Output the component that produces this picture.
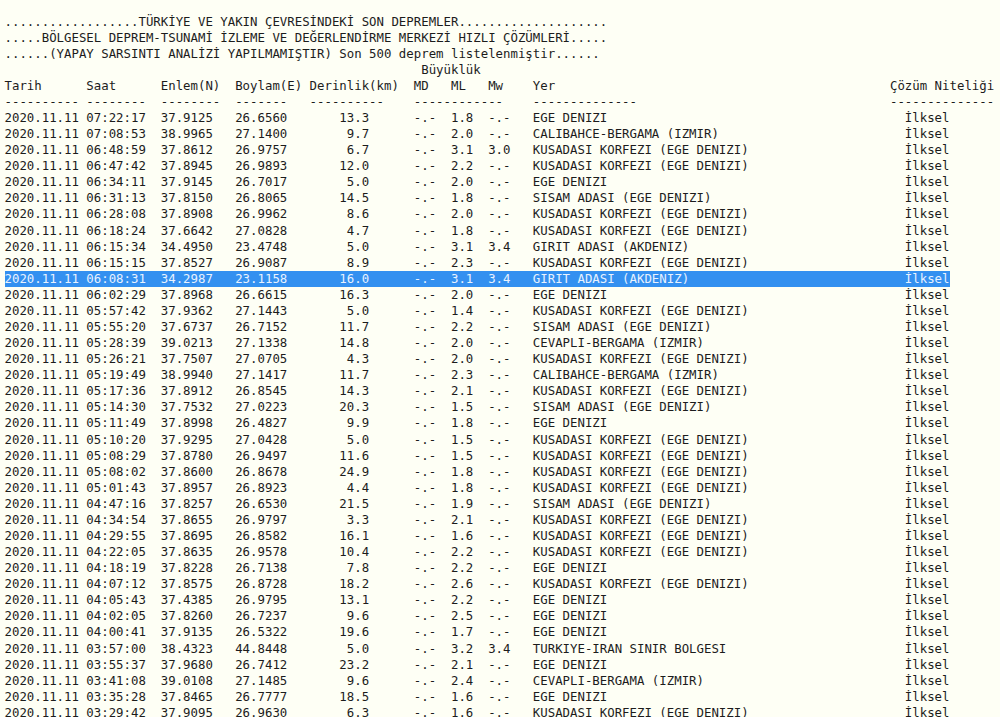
const KUS = "KUSADASI KORFEZI (EGE DENIZI)";
const EGE = "EGE DENIZI";
const SIS = "SISAM ADASI (EGE DENIZI)";
const GIR = "GIRIT ADASI (AKDENIZ)";
const CAL = "CALIBAHCE-BERGAMA (IZMIR)";
const CEV = "CEVAPLI-BERGAMA (IZMIR)";

// saat, enlem, boylam, derinlik, ML, Mw, yer
const rows: [string, string, string, string, string, string, string][] = [
  ["07:22:17", "37.9125", "26.6560", "13.3", "1.8", "-.-", EGE],
  ["07:08:53", "38.9965", "27.1400", "9.7", "2.0", "-.-", CAL],
  ["06:48:59", "37.8612", "26.9757", "6.7", "3.1", "3.0", KUS],
  ["06:47:42", "37.8945", "26.9893", "12.0", "2.2", "-.-", KUS],
  ["06:34:11", "37.9145", "26.7017", "5.0", "2.0", "-.-", EGE],
  ["06:31:13", "37.8150", "26.8065", "14.5", "1.8", "-.-", SIS],
  ["06:28:08", "37.8908", "26.9962", "8.6", "2.0", "-.-", KUS],
  ["06:18:24", "37.6642", "27.0828", "4.7", "1.8", "-.-", KUS],
  ["06:15:34", "34.4950", "23.4748", "5.0", "3.1", "3.4", GIR],
  ["06:15:15", "37.8527", "26.9087", "8.9", "2.3", "-.-", KUS],
  ["06:08:31", "34.2987", "23.1158", "16.0", "3.1", "3.4", GIR],
  ["06:02:29", "37.8968", "26.6615", "16.3", "2.0", "-.-", EGE],
  ["05:57:42", "37.9362", "27.1443", "5.0", "1.4", "-.-", KUS],
  ["05:55:20", "37.6737", "26.7152", "11.7", "2.2", "-.-", SIS],
  ["05:28:39", "39.0213", "27.1338", "14.8", "2.0", "-.-", CEV],
  ["05:26:21", "37.7507", "27.0705", "4.3", "2.0", "-.-", KUS],
  ["05:19:49", "38.9940", "27.1417", "11.7", "2.3", "-.-", CAL],
  ["05:17:36", "37.8912", "26.8545", "14.3", "2.1", "-.-", KUS],
  ["05:14:30", "37.7532", "27.0223", "20.3", "1.5", "-.-", SIS],
  ["05:11:49", "37.8998", "26.4827", "9.9", "1.8", "-.-", EGE],
  ["05:10:20", "37.9295", "27.0428", "5.0", "1.5", "-.-", KUS],
  ["05:08:29", "37.8780", "26.9497", "11.6", "1.5", "-.-", KUS],
  ["05:08:02", "37.8600", "26.8678", "24.9", "1.8", "-.-", KUS],
  ["05:01:43", "37.8957", "26.8923", "4.4", "1.8", "-.-", KUS],
  ["04:47:16", "37.8257", "26.6530", "21.5", "1.9", "-.-", SIS],
  ["04:34:54", "37.8655", "26.9797", "3.3", "2.1", "-.-", KUS],
  ["04:29:55", "37.8695", "26.8582", "16.1", "1.6", "-.-", KUS],
  ["04:22:05", "37.8635", "26.9578", "10.4", "2.2", "-.-", KUS],
  ["04:18:19", "37.8228", "26.7138", "7.8", "2.2", "-.-", EGE],
  ["04:07:12", "37.8575", "26.8728", "18.2", "2.6", "-.-", KUS],
  ["04:05:43", "37.4385", "26.9795", "13.1", "2.2", "-.-", EGE],
  ["04:02:05", "37.8260", "26.7237", "9.6", "2.5", "-.-", EGE],
  ["04:00:41", "37.9135", "26.5322", "19.6", "1.7", "-.-", EGE],
  ["03:57:00", "38.4323", "44.8448", "5.0", "3.2", "3.4", "TURKIYE-IRAN SINIR BOLGESI"],
  ["03:55:37", "37.9680", "26.7412", "23.2", "2.1", "-.-", EGE],
  ["03:41:08", "39.0108", "27.1485", "9.6", "2.4", "-.-", CEV],
  ["03:35:28", "37.8465", "26.7777", "18.5", "1.6", "-.-", EGE],
  ["03:29:42", "37.9095", "26.9630", "6.3", "1.6", "-.-", KUS],
];

const SELECTED = "06:08:31";

function formatRow(r: (typeof rows)[number]) {
  const [saat, enlem, boylam, derinlik, ml, mw, yer] = r;
  return (
    `2020.11.11 ${saat}  ${enlem}   ${boylam}` +
    derinlik.padStart(11) +
    `      -.-  ${ml}  ${mw}   ` +
    yer.padEnd(50) +
    "İlksel"
  );
}

const head = [
  "..................TÜRKİYE VE YAKIN ÇEVRESİNDEKİ SON DEPREMLER....................",
  ".....BÖLGESEL DEPREM-TSUNAMİ İZLEME VE DEĞERLENDİRME MERKEZİ HIZLI ÇÖZÜMLERİ.....",
  "......(YAPAY SARSINTI ANALİZİ YAPILMAMIŞTIR) Son 500 deprem listelenmiştir......",
  "                                                        Büyüklük",
  "Tarih      Saat      Enlem(N)  Boylam(E) Derinlik(km)  MD   ML   Mw    Yer                                             Çözüm Niteliği",
  "---------- --------  --------  -------   ----------    ------------    --------------                                  --------------",
];

export default function App() {
  return (
    <div className="h-[717px] overflow-hidden bg-[#fefff5]">
      <pre className="pt-[13.5px] pl-[4.5px] font-['DejaVu_Sans_Mono',monospace] text-[12.36px] leading-[16.08px] text-[#1c1c1c]">
        {head.map((line) => (
          <div key={line} className="h-[16.08px]">
            {line}
          </div>
        ))}
        {rows.map((r) => (
          <div key={r[0]} className="h-[16.08px]">
            {r[0] === SELECTED ? (
              <span className="inline-block bg-[#3390f0] text-[#e8f2ff]">{formatRow(r)}</span>
            ) : (
              formatRow(r)
            )}
          </div>
        ))}
      </pre>
    </div>
  );
}
